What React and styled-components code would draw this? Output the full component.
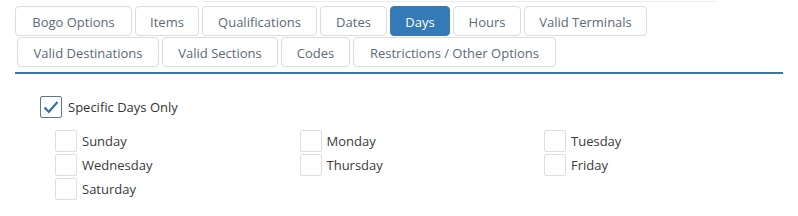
import React from "react";
import styled, { createGlobalStyle } from "styled-components";

const Global = createGlobalStyle`
  html, body { margin: 0; padding: 0; background: #fff; }
  body { font-family: "Open Sans", "Noto Sans", Arial, sans-serif; font-size: 13px; color: #333; }
`;

const Page = styled.div`
  width: 798px;
  height: 216px;
  overflow: hidden;
  display: flex;
  flex-direction: column;
`;

const TopEdge = styled.div`
  margin-left: 202px;
  width: 513px;
  height: 1px;
  border: 1px solid #ececec;
  border-top: none;
  border-radius: 0 0 4px 4px;
`;

const Tabs = styled.div`
  margin: 4px 15px 0 15px;
  padding-bottom: 5px;
  border-bottom: 2px solid #3b74a6;
  display: flex;
  flex-direction: column;
  gap: 1px;
`;

const TabRow = styled.div`
  display: flex;
  gap: 3px;
  padding-left: ${(p) => p.$indent || 0}px;
`;

const Tab = styled.div`
  box-sizing: border-box;
  width: ${(p) => p.$w}px;
  height: 30px;
  line-height: 30px;
  text-align: center;
  font-size: 13px;
  white-space: nowrap;
  border: 1px solid ${(p) => (p.$active ? "#337ab7" : "#dcdcdc")};
  border-radius: 4px;
  background: ${(p) => (p.$active ? "#337ab7" : "#fff")};
  color: ${(p) => (p.$active ? "#fff" : "#5a6a7a")};
`;

const Body = styled.div`
  padding: 22px 0 0 40px;
`;

const MainCheck = styled.label`
  display: flex;
  align-items: center;
  gap: 6px;
  height: 22px;
  line-height: 24px;
  color: #333;
`;

const Box = styled.span`
  box-sizing: border-box;
  width: 22px;
  height: 22px;
  flex: none;
  border: 1px solid ${(p) => (p.$checked ? "#55789a" : "#dedede")};
  border-radius: 2px;
  background: #fff;
  display: flex;
  align-items: center;
  justify-content: center;
`;

const DayGrid = styled.div`
  margin: 12px 0 0 15px;
  display: grid;
  grid-template-columns: repeat(3, 244.5px);
  grid-auto-rows: 22px;
  row-gap: 2px;
`;

const Day = styled.label`
  display: flex;
  align-items: center;
  gap: 5px;
  line-height: 24px;
  color: #3a3a3a;
`;

const row1 = [
  ["Bogo Options", 117],
  ["Items", 64],
  ["Qualifications", 115],
  ["Dates", 67],
  ["Days", 60, true],
  ["Hours", 68],
  ["Valid Terminals", 123],
];
const row2 = [
  ["Valid Destinations", 142],
  ["Valid Sections", 116],
  ["Codes", 69],
  ["Restrictions / Other Options", 203],
];

const days = ["Sunday", "Monday", "Tuesday", "Wednesday", "Thursday", "Friday", "Saturday"];

export default function App() {
  return (
    <Page>
      <Global />
      <TopEdge />
      <Tabs>
        <TabRow>
          {row1.map(([t, w, a]) => (
            <Tab key={t} $w={w} $active={a}>{t}</Tab>
          ))}
        </TabRow>
        <TabRow $indent={2}>
          {row2.map(([t, w]) => (
            <Tab key={t} $w={w}>{t}</Tab>
          ))}
        </TabRow>
      </Tabs>
      <Body>
        <MainCheck>
          <Box $checked>
            <svg width="16" height="14" viewBox="0 0 16 14">
              <path d="M1.5 7.5 L5.8 11.8 L14.5 2" fill="none" stroke="#3a6fa6" strokeWidth="2.2" />
            </svg>
          </Box>
          Specific Days Only
        </MainCheck>
        <DayGrid>
          {days.map((d) => (
            <Day key={d}>
              <Box />
              {d}
            </Day>
          ))}
        </DayGrid>
      </Body>
    </Page>
  );
}
